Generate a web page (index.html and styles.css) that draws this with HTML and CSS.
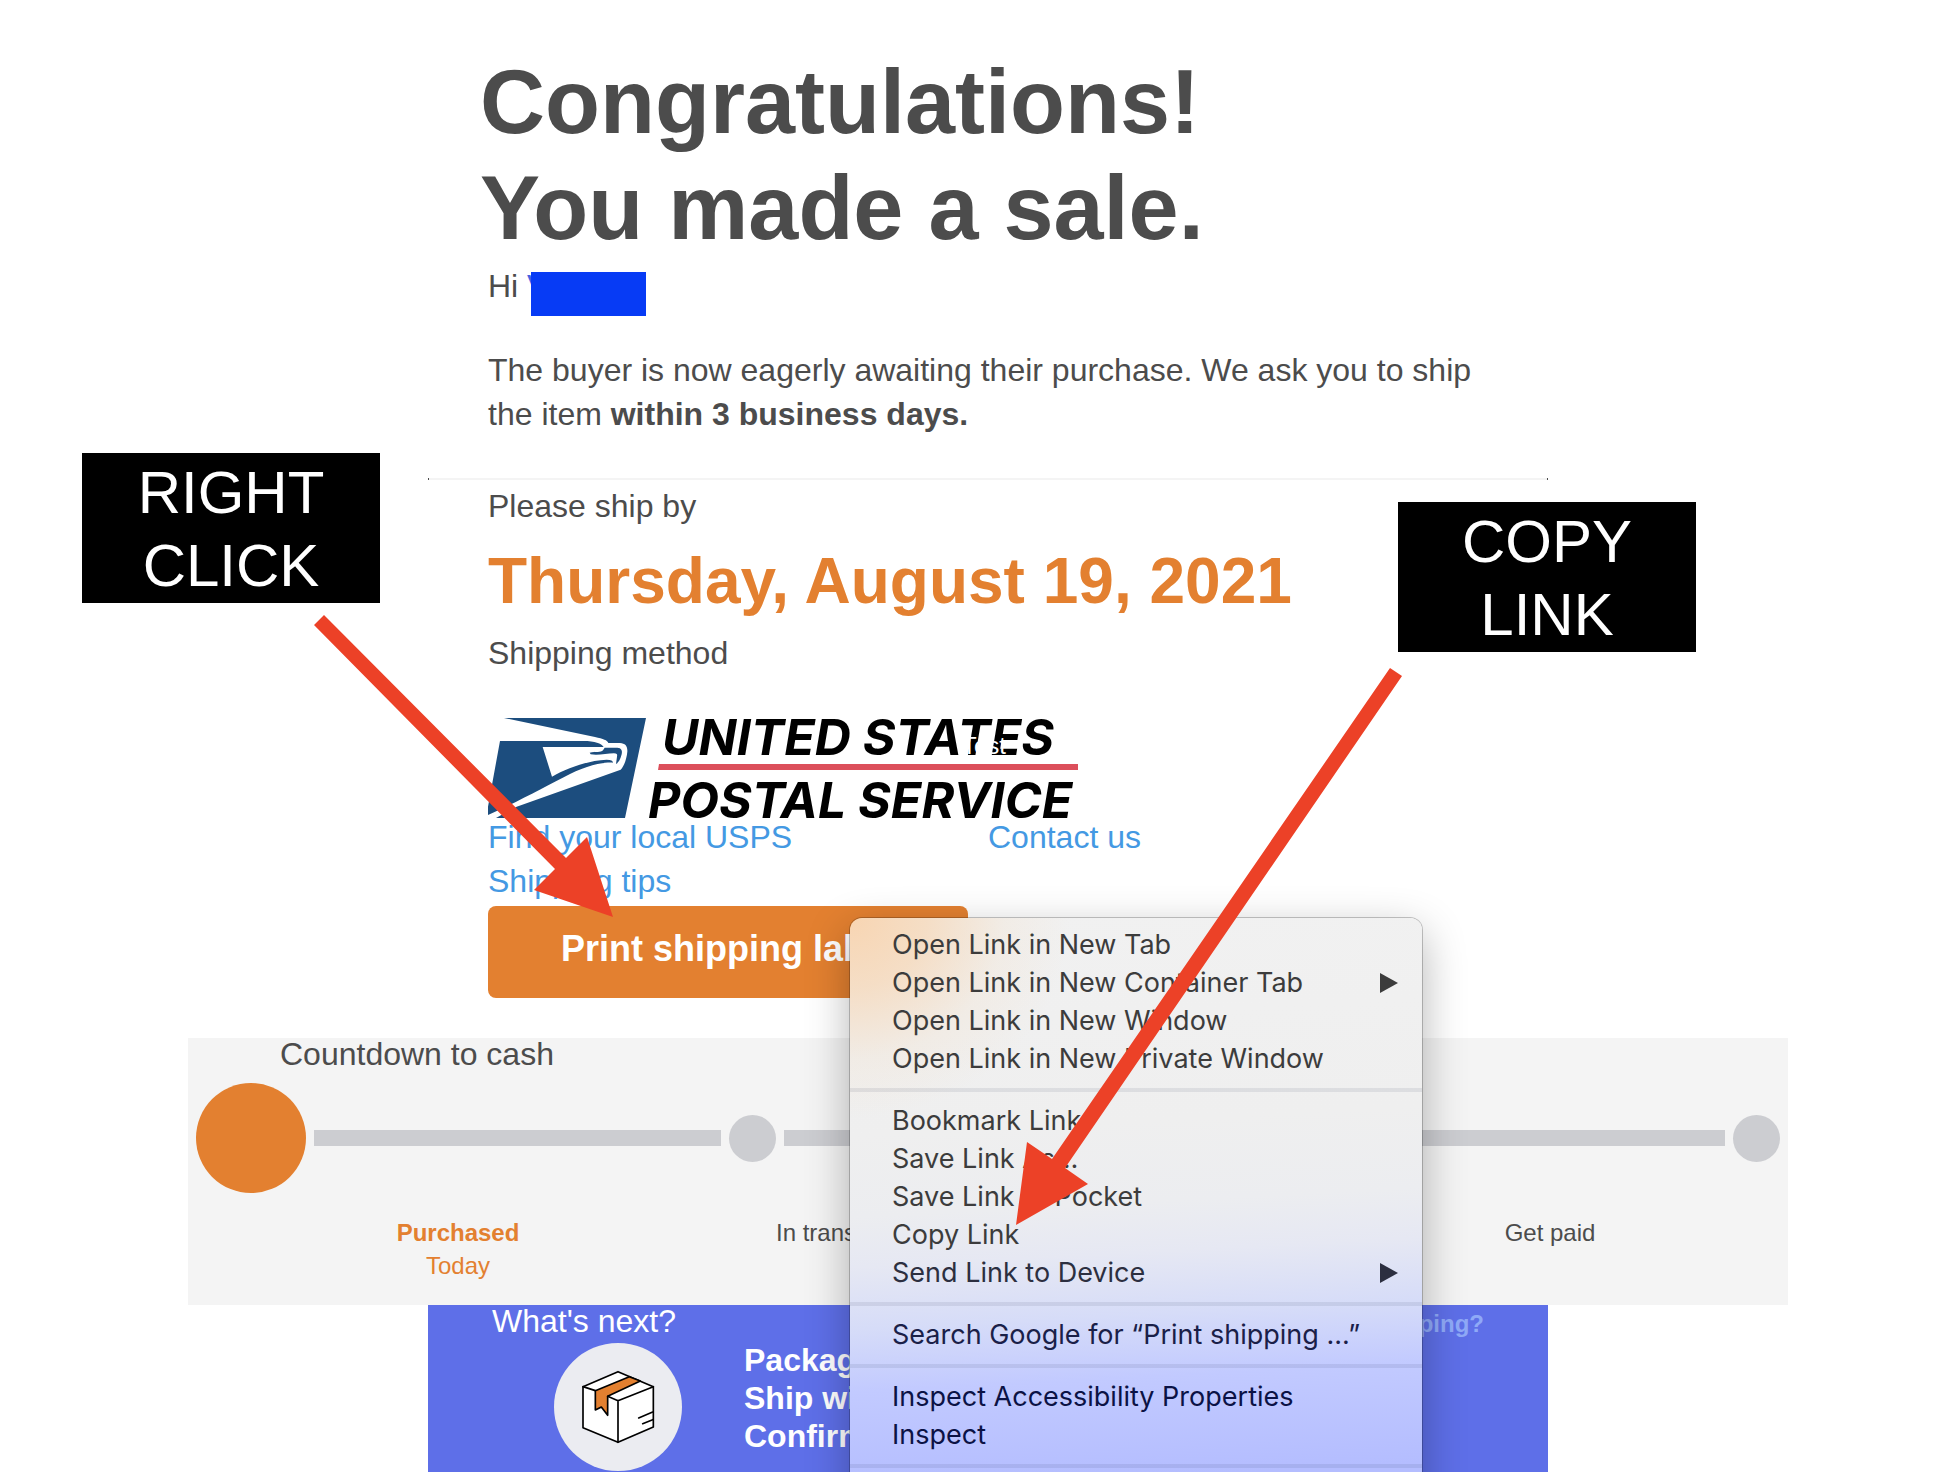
FILE: index.html
```html
<!DOCTYPE html>
<html lang="en">
<head>
<meta charset="utf-8">
<title>Congratulations! You made a sale.</title>
<meta name="viewport" content="width=device-width, initial-scale=1">
<link rel="stylesheet" href="styles.css">
</head>
<body>
<div class="page">
  <main class="mail">
    <section class="panel intro">
      <h1 class="headline">Congratulations!<br>You made a sale.</h1>
      <p class="text greeting">Hi <span class="name">V<span class="redaction"></span></span></p>
      <p class="text message">The buyer is now eagerly awaiting their purchase. We ask you to ship the item <strong>within 3 business days.</strong></p>
    </section>
    <hr class="rule">
    <section class="panel shipping">
      <p class="text">Please ship by</p>
      <h2 class="due-date">Thursday, August 19, 2021</h2>
      <p class="text">Shipping method</p>
      <svg class="carrier" viewBox="0 0 590 100" role="img" aria-label="United States Postal Service">
        <g fill="#1c4d7e" transform="scale(0.33333) translate(-24 -24)">
          <path d="M72 24H498L435 324H48L110 290L422 179C433 168 440 145 442 125C443 108 436 100 420 99H385C382 91 370 86 345 81Z"/>
          <path d="M60 93H310C345 93 364 100 371 111H188L216 200C260 175 325 151 380 149C393 149 399 152 399 158C370 156 320 167 270 192C200 228 90 287 24 315V290Z"/>
          <path d="M329 128C348 125 362 128 369 121L374 113H412C424 114 428 121 425 133C421 148 416 158 408 162L411 140C413 132 410 130 402 130C380 130 355 137 332 133Z"/>
        </g>
        <path d="M171 46H590V52H170Z" fill="#dc4f5b"/>
        <text class="carrier-name" x="174" y="37">UNITED STATES</text>
        <text class="carrier-name" x="160" y="100">POSTAL SERVICE</text>
        <text class="stray" x="474" y="36">Test</text>
      </svg>
      <nav class="links">
        <a class="text" href="#usps">Find your local USPS</a>
        <a class="text" href="#contact">Contact us</a>
        <a class="text" href="#tips">Shipping tips</a>
      </nav>
      <button class="print" type="button">Print shipping label</button>
    </section>
    <section class="countdown">
      <h3 class="section-title countdown-title">Countdown to cash</h3>
      <div class="track">
        <span class="dot dot-current"></span><span class="bar bar-first"></span>
        <span class="dot"></span><span class="bar"></span>
        <span class="dot"></span><span class="bar"></span>
        <span class="dot"></span>
      </div>
      <ol class="steps">
        <li class="step step-current"><strong>Purchased</strong><br>Today</li>
        <li class="step">In transit</li>
        <li class="step">Delivered</li>
        <li class="step">Get paid</li>
      </ol>
    </section>
    <section class="next">
      <div class="next-head">
        <h3 class="section-title">What's next?</h3>
        <a class="help" href="#help">Need help shipping?</a>
      </div>
      <div class="next-body">
        <svg class="package" viewBox="0 0 384 384" aria-hidden="true">
          <circle cx="192" cy="192" r="192" fill="#ebecf1"/>
          <g stroke="#000" stroke-width="5" stroke-linejoin="round" stroke-linecap="round" fill="#fff">
            <path d="M87 131L192 86L298 131V252L192 298L87 254Z"/>
            <path d="M124 143L226 101L259 114L161 160V217L142 192L124 201Z" fill="#e38030"/>
            <path d="M87 131L124 143M161 160L192 173L298 131M192 173V298M254 225L296 207M266 242L296 230" fill="none"/>
          </g>
        </svg>
        <p class="todo">Package item<br>Ship within 3 days<br>Confirm shipment</p>
      </div>
    </section>
  </main>

  <div class="menu" role="menu">
    <button class="item" role="menuitem">Open Link in New Tab</button>
    <button class="item submenu" role="menuitem">Open Link in New Container Tab</button>
    <button class="item" role="menuitem">Open Link in New Window</button>
    <button class="item" role="menuitem">Open Link in New Private Window</button>
    <hr class="divider">
    <button class="item" role="menuitem">Bookmark Link</button>
    <button class="item" role="menuitem">Save Link As…</button>
    <button class="item" role="menuitem">Save Link to Pocket</button>
    <button class="item" role="menuitem">Copy Link</button>
    <button class="item tinted submenu" role="menuitem">Send Link to Device</button>
    <hr class="divider">
    <button class="item deep" role="menuitem">Search Google for “Print shipping ...”</button>
    <hr class="divider">
    <button class="item deepest" role="menuitem">Inspect Accessibility Properties</button>
    <button class="item deepest" role="menuitem">Inspect</button>
    <hr class="divider">
  </div>

  <div class="callout callout-right-click">RIGHT<br>CLICK</div>
  <div class="callout callout-copy">COPY<br>LINK</div>
  <svg class="arrow arrow-right-click" viewBox="0 0 300 303" aria-hidden="true"><path d="M11 1L253 244L274 223L300 303L221 276L242 255L1 11Z"/></svg>
  <svg class="arrow arrow-copy" viewBox="0 0 388 558" aria-hidden="true"><path d="M375 1L387 9L50 501L73 517L1 558L12 475L37 492Z"/></svg>
</div>
</body>
</html>
```
FILE: styles.css
```css
* { box-sizing: border-box; }

body {
  margin: 0;
  background: #fff;
  color: #4c4c4c;
  font-family: "Liberation Sans", Arial, Helvetica, sans-serif;
}

h1, h2, h3, p, ol { margin: 0; padding: 0; }

.page {
  position: relative;
  height: 100vh;
  overflow: hidden;
}

.mail {
  display: flex;
  flex-direction: column;
  align-items: center;
  min-height: 100%;
  padding: 49px 0 0 26px;
}

.panel {
  width: 100%;
  max-width: 1120px;
  padding: 0 60px;
}

.headline {
  margin-left: -8px;
  font-size: 90px;
  line-height: 106px;
}

.text { font-size: 32px; line-height: 44px; }
.greeting { margin-top: 3px; }
.message { margin-top: 40px; }

.name { position: relative; color: #4561e0; }

.redaction {
  position: absolute;
  top: 4px;
  left: 4px;
  width: 115px;
  height: 44px;
  background: #073bf5;
}

.rule {
  width: 100%;
  max-width: 1120px;
  height: 2px;
  margin: 42px 0 4px;
  border: solid #4c4c4c;
  border-width: 0 1px;
  background: #f4f4f4;
}

.due-date {
  margin: 17px 0 14px;
  color: #e38030;
  font-size: 64px;
  line-height: 72px;
}

.carrier {
  display: block;
  width: 590px;
  height: 100px;
  margin: 43px 0 -3px;
  overflow: visible;
}

.carrier-name {
  font: italic 700 50px Inter, "Open Sans", sans-serif;
  fill: #000;
}

.stray { font-size: 24px; fill: #fff; }

.links {
  display: grid;
  grid-template-columns: 1fr 1fr;
}

.links a { color: #4499e3; text-decoration: none; }

.print {
  display: block;
  width: 480px;
  height: 92px;
  margin-top: 3px;
  padding: 0 0 6px;
  border: 0;
  border-radius: 8px;
  background: #e38030;
  color: #fff;
  font: 700 36px "Liberation Sans", Arial, sans-serif;
}

.section-title {
  font-size: 32px;
  font-weight: 400;
  line-height: 32px;
}

.countdown {
  width: 100%;
  max-width: 1600px;
  margin-top: 40px;
  padding-bottom: 23px;
  background: #f4f4f4;
}

.countdown-title { padding-left: 92px; }

.track {
  display: flex;
  align-items: center;
  gap: 8px;
  margin-top: 13px;
  padding: 0 8px;
}

.dot {
  width: 47px;
  height: 47px;
  border-radius: 50%;
  background: #cccdd1;
}

.dot-current { width: 110px; height: 110px; background: #e38030; }
.bar { flex: 14; height: 16px; background: #cccdd1; }
.bar-first { flex: 13; }

.steps {
  display: grid;
  grid-template-columns: repeat(4, 1fr);
  margin-top: 23px;
  padding: 0 56px 0 88px;
  list-style: none;
}

.step { font-size: 24px; line-height: 33px; text-align: center; }
.step-current { color: #e38030; }

.next {
  flex: 1;
  width: 100%;
  max-width: 1120px;
  background: #5e6fe8;
  color: #fff;
}

.next-head {
  display: flex;
  align-items: baseline;
  justify-content: space-between;
  padding: 0 64px;
}

.help {
  color: #8fa9f7;
  font-size: 24px;
  font-weight: 700;
  line-height: 32px;
  text-decoration: none;
}

.next-body {
  display: flex;
  gap: 62px;
  align-items: flex-start;
  margin-top: 1px;
  padding-left: 126px;
}

.package { width: 128px; height: 128px; margin-top: 2px; }

.todo {
  font-size: 32px;
  font-weight: 700;
  line-height: 38px;
}

.menu {
  position: absolute;
  top: 918px;
  bottom: -40px;
  left: 850px;
  width: 572px;
  padding-top: 8px;
  border-radius: 12px;
  background:
    radial-gradient(ellipse 220px 200px at 0 0, #f8d5b2 0, #f6d9bbcc 35%, #f3e3d055 70%, #f0ece800 100%),
    linear-gradient(177deg, #f1f1f1 0, #efefef 35%, #ecedf0 48%, #e6e8f3 56%, #d6dcf8 66%, #c2caff 76%, #b4bdff 92%);
  box-shadow: 0 0 0 1px rgba(0, 0, 0, .22), 0 14px 44px rgba(0, 0, 0, .3);
}

.item {
  display: block;
  position: relative;
  width: 100%;
  height: 38px;
  padding: 0 24px 0 42px;
  border: 0;
  background: none;
  color: #3c3c3c;
  font: 27px/38px Inter, "Liberation Sans", sans-serif;
  text-align: left;
}

.submenu {
  display: flex;
  align-items: center;
  justify-content: space-between;
}

.submenu::after {
  content: "";
  width: 18px;
  height: 20px;
  background: currentColor;
  clip-path: polygon(0 0, 100% 50%, 0 100%);
}

.tinted { color: #2c2f40; }
.deep { color: #1a2048; }
.deepest { color: #0b1245; }

.divider {
  height: 4px;
  margin: 10px 0;
  border: 0;
  background: rgba(30, 40, 80, .09);
}

.callout {
  position: absolute;
  width: 298px;
  height: 150px;
  background: #000;
  color: #fff;
  font-size: 60px;
  line-height: 73px;
  padding-top: 3px;
  text-align: center;
}

.callout-right-click { top: 453px; left: 82px; }
.callout-copy { top: 502px; left: 1398px; }

.arrow { position: absolute; fill: #ec4127; }
.arrow-right-click { top: 614px; left: 313px; width: 300px; height: 303px; }
.arrow-copy { top: 667px; left: 1015px; width: 388px; height: 558px; }
```
